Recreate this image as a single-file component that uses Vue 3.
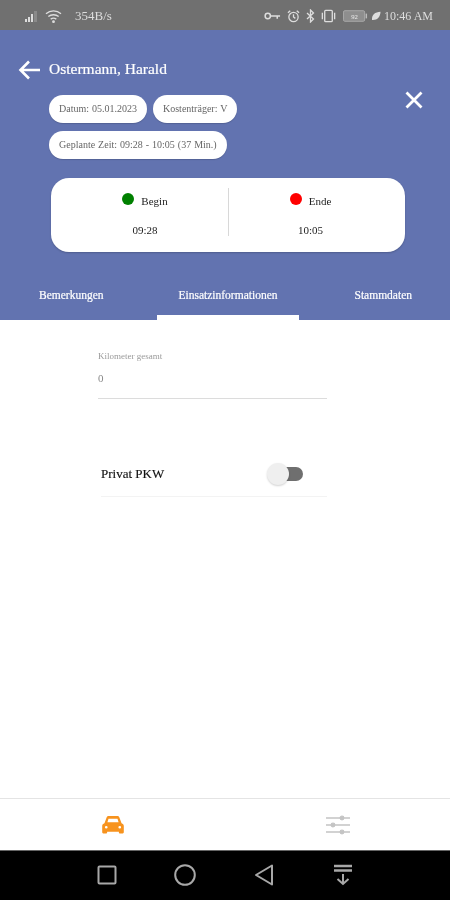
<script setup>
const chips = ['Datum: 05.01.2023', 'Kostenträger: V', 'Geplante Zeit: 09:28 - 10:05 (37 Min.)']
const times = [
  { label: 'Begin', time: '09:28', color: '#008000' },
  { label: 'Ende', time: '10:05', color: '#ff0000' }
]
</script>

<template>
  <div class="page">
    <div class="status">
      <div class="status-left">
        <svg class="signal" width="16" height="14" viewBox="0 0 16 14">
          <rect x="0" y="10" width="2" height="3" fill="#ddd" />
          <rect x="3" y="8" width="2" height="5" fill="#ddd" />
          <rect x="6" y="5" width="2" height="8" fill="#ddd" />
          <rect x="9" y="2" width="3" height="11" fill="#8a8a8a" />
        </svg>
        <svg class="wifi" width="17" height="15" viewBox="0 0 18 16" fill="none" stroke="#ddd" stroke-width="1.4">
          <path d="M1 5 C5.500 1 12.500 1 17 5" />
          <path d="M3.500 8 C6.500 5.500 11.500 5.500 14.500 8" />
          <path d="M6 10.800 C8 9.400 10 9.400 12 10.800" />
          <circle cx="9" cy="13.500" r="0.8" fill="#ddd" />
        </svg>
        <span class="speed">354B/s</span>
      </div>
      <div class="status-right">
        <svg width="17" height="10" viewBox="0 0 18 10" fill="none" stroke="#ddd" stroke-width="1.6">
          <circle cx="4" cy="5" r="2.800" />
          <path d="M7 5 H17 M14 5 V8" />
        </svg>
        <svg class="gap6" width="13" height="15" viewBox="0 0 14 15" fill="none" stroke="#ddd" stroke-width="1.4">
          <circle cx="7" cy="8" r="5" />
          <path d="M7 5 V8 L9 9.500 M1 3.500 L3.500 1.200 M13 3.500 L10.500 1.200" />
        </svg>
        <svg class="gap6" width="9" height="14" viewBox="0 0 9 14" fill="none" stroke="#ddd" stroke-width="1.3">
          <path d="M1 4 L7.500 10 L4.500 13 V1 L7.500 4 L1 10" />
        </svg>
        <svg class="gap5" width="17" height="14" viewBox="0 0 18 14" fill="none" stroke="#ddd" stroke-width="1.4">
          <rect x="5" y="1" width="8" height="12" rx="1" />
          <path d="M2.500 3.500 V10.500 M15.500 3.500 V10.500" />
        </svg>
        <svg class="gap6" width="25" height="12" viewBox="0 0 26 12">
          <rect x="0.500" y="0.500" width="22" height="11" rx="1.500" fill="#8e8e8e" stroke="#aaa" />
          <rect x="23.500" y="3.500" width="1.500" height="5" fill="#bbb" />
          <text x="12" y="9" class="battery-text">92</text>
        </svg>
        <svg class="gap3" width="10" height="10" viewBox="0 0 10 10">
          <path d="M1 9 C0.500 4 4 1 9.500 0.800 C9.500 6 6 9.500 1 9 Z" fill="#ddd" />
        </svg>
        <span class="clock">10:46 AM</span>
      </div>
    </div>

    <header class="header">
      <div class="top">
        <svg class="back" width="22" height="20" viewBox="0 0 22 20" fill="none" stroke="#fff" stroke-width="2.600">
          <path d="M22 10 H3 M11 1.500 L2.500 10 L11 18.500" />
        </svg>
        <h1 class="name">Ostermann, Harald</h1>
        <div class="chips">
          <span v-for="chip in chips" :key="chip" class="chip">{{ chip }}</span>
        </div>
        <svg class="close" width="18" height="18" viewBox="0 0 18 18" stroke="#fff" stroke-width="2.800">
          <path d="M1.500 1.500 L16.500 16.500 M16.500 1.500 L1.500 16.500" />
        </svg>
      </div>

      <div class="card">
        <div v-for="t in times" :key="t.label" class="card-col">
          <div class="card-label">
            <span class="dot" :style="{ background: t.color }"></span>
            <span>{{ t.label }}</span>
          </div>
          <div class="card-time">{{ t.time }}</div>
        </div>
      </div>

      <nav class="tabs">
        <div class="tab tab-first">Bemerkungen</div>
        <div class="tab tab-active">Einsatzinformationen</div>
        <div class="tab tab-last">Stammdaten</div>
      </nav>
    </header>

    <main class="main">
      <div class="field">
        <div class="field-label">Kilometer gesamt</div>
        <div class="field-value">0</div>
      </div>
      <div class="toggle-row">
        <span>Privat PKW</span>
        <div class="switch"><span class="thumb"></span></div>
      </div>
    </main>

    <div class="bottom">
      <svg width="22" height="18" viewBox="0 0 24 20">
        <path fill="#f7931e" fill-rule="evenodd" d="M5 1.500 C5.400 0.600 6.200 0 7.200 0 H16.800 C17.800 0 18.600 0.600 19 1.500 L21.500 8 C23 8.500 24 9.500 24 11 V18 C24 19 23 19.500 22 19.500 H20 C19 19.500 18.500 19 18.500 18 V17.500 H5.500 V18 C5.500 19 5 19.500 4 19.500 H2 C1 19.500 0 19 0 18 V11 C0 9.500 1 8.500 2.500 8 Z M7 3 L5.800 7 H18.200 L17 3 Z M4.500 11 A1.500 1.500 0 1 0 4.500 14 A1.500 1.500 0 1 0 4.500 11 Z M19.500 11 A1.500 1.500 0 1 0 19.500 14 A1.500 1.500 0 1 0 19.500 11 Z" />
      </svg>
      <svg width="24" height="20" viewBox="0 0 24 20" stroke="#c4c4c4" stroke-width="1.300" fill="#c4c4c4">
        <path d="M0 3 H24 M0 10 H24 M0 17 H24" />
        <circle cx="16" cy="3" r="1.800" />
        <circle cx="7" cy="10" r="1.800" />
        <circle cx="16" cy="17" r="1.800" />
      </svg>
    </div>

    <div class="sysnav">
      <svg width="20" height="20" viewBox="0 0 20 20" fill="none" stroke="#a8a8a8" stroke-width="2">
        <rect x="1.500" y="1.500" width="17" height="17" rx="1" />
      </svg>
      <svg width="22" height="22" viewBox="0 0 22 22" fill="none" stroke="#a8a8a8" stroke-width="2">
        <circle cx="11" cy="11" r="9.800" />
      </svg>
      <svg width="20" height="22" viewBox="0 0 20 22" fill="none" stroke="#a8a8a8" stroke-width="2" stroke-linejoin="round">
        <path d="M18 1.500 V20.500 L2 11 Z" />
      </svg>
      <svg width="18" height="22" viewBox="0 0 18 22" fill="none" stroke="#a8a8a8" stroke-width="2">
        <path d="M0 2 H18 M0 6.500 H18" stroke-width="2.400" />
        <path d="M9 10 V20 M3.500 15 L9 20 L14.500 15" />
      </svg>
    </div>
  </div>
</template>

<style scoped>
.page {
  width: 450px;
  height: 900px;
  display: flex;
  flex-direction: column;
  overflow: hidden;
  background: #fff;
  font-family: "Liberation Serif", "DejaVu Serif", serif;
  filter: blur(0.6px);
}
.status {
  height: 30px;
  flex: none;
  background: #707070;
  color: #ddd;
  display: flex;
  align-items: center;
  justify-content: space-between;
  padding: 2px 17px 0 25px;
  box-sizing: border-box;
}
.status-left, .status-right {
  display: flex;
  align-items: center;
}
.signal { margin-right: 4px; }
.wifi { margin-right: 13px; }
.speed { font-size: 13px; line-height: 14px; }
.gap6 { margin-left: 6px; }
.gap5 { margin-left: 5px; }
.gap3 { margin-left: 3px; }
.battery-text { font-size: 7px; fill: #eee; text-anchor: middle; }
.clock { font-size: 12px; margin-left: 3px; }
.header {
  height: 290px;
  flex: none;
  background: #6273b0;
  display: flex;
  flex-direction: column;
}
.top {
  display: grid;
  grid-template-columns: 49px 1fr 45px;
  margin-top: 28px;
  align-items: start;
}
.back { margin: 2px 0 0 18px; }
.name {
  margin: 0;
  font-size: 15.500px;
  line-height: 22px;
  font-weight: 400;
  color: #fff;
  grid-column: 2 / 4;
  -webkit-text-stroke: 0.2px #fff;
}
.chips {
  grid-column: 2;
  margin-top: 15px;
  width: 200px;
  display: flex;
  flex-wrap: wrap;
  gap: 8px 6px;
}
.chip {
  height: 28px;
  line-height: 27px;
  padding: 0 10px;
  background: #fff;
  border-radius: 14px;
  font-size: 10px;
  word-spacing: 0.5px;
  color: #666;
  white-space: nowrap;
  box-shadow: 0 1px 1px rgba(0, 0, 0, 0.15);
}
.close { margin-top: 11px; grid-column: 3; grid-row: 2; }
.card {
  width: 354px;
  height: 74px;
  margin: 19px 0 0 51px;
  background: #fff;
  border-radius: 18px;
  display: flex;
  align-items: center;
  padding: 10px 0 16px;
  box-sizing: border-box;
  box-shadow: 0 1px 2px rgba(0, 0, 0, 0.2);
}
.card-col {
  height: 48px;
  display: flex;
  flex-direction: column;
  align-items: center;
  justify-content: space-between;
  font-size: 11px;
  color: #222;
  padding-top: 7px;
  box-sizing: border-box;
}
.card-col:first-child { flex: none; width: 178px; border-right: 1px solid #d8d8d8; padding-left: 11px; }
.card-col:last-child { flex: 1; padding-right: 13px; }
.card-label { display: flex; align-items: center; gap: 7px; }
.dot { width: 12px; height: 12px; border-radius: 50%; margin-top: -4px; }
.card-time { line-height: 12px; }
.tabs {
  margin-top: auto;
  height: 45px;
  display: flex;
  color: #fff;
  font-size: 11.500px;
  line-height: 40px;
  -webkit-text-stroke: 0.2px #fff;
}
.tab-first { width: 157px; padding-left: 39px; box-sizing: border-box; }
.tab-active {
  width: 142px;
  text-align: center;
  box-sizing: border-box;
  border-bottom: 5px solid #fff;
}
.tab-last { margin-left: auto; padding-right: 38px; }
.main { flex: 1; display: flex; flex-direction: column; }
.field {
  margin: 31px 0 0 98px;
  width: 229px;
  height: 47px;
  border-bottom: 1px solid #dcdcdc;
  color: #9a9a9a;
}
.field-label { font-size: 9px; line-height: 11px; }
.field-value { font-size: 11px; margin-top: 10px; color: #888; }
.toggle-row {
  margin: 52px 0 0 101px;
  width: 226px;
  height: 45px;
  display: flex;
  align-items: center;
  font-size: 13px;
  color: #111;
  border-bottom: 1px solid #f3f3f3;
  -webkit-text-stroke: 0.15px #111;
}
.switch {
  position: relative;
  width: 24px;
  height: 14px;
  margin-left: auto;
  margin-right: 24px;
  border-radius: 7px;
  background: #6f6f6f;
}
.thumb {
  position: absolute;
  left: -12px;
  top: -4px;
  width: 22px;
  height: 22px;
  border-radius: 50%;
  background: #efefef;
  box-shadow: 0 1px 2px rgba(0, 0, 0, 0.18);
}
.bottom {
  height: 52px;
  flex: none;
  box-sizing: border-box;
  background: #fff;
  border-top: 1px solid #e4e4e4;
  display: grid;
  grid-template-columns: 225px 225px;
  justify-items: center;
  align-items: center;
}
.sysnav {
  height: 50px;
  flex: none;
  background: #000;
  border-top: 1px solid #666;
  box-sizing: border-box;
  display: flex;
  align-items: center;
  padding: 0 0 2px 97px;
}
.sysnav svg:nth-child(2) { margin-left: 57px; }
.sysnav svg:nth-child(3) { margin-left: 58px; }
.sysnav svg:nth-child(4) { margin-left: 60px; }
</style>
